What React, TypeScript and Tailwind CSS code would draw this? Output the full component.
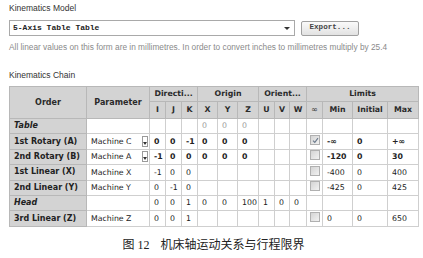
import React from 'react'

// Column widths in px (order, parameter, I J K, X Y Z, U V W, ∞, Min, Initial, Max)
const COLS = [77, 63, 16, 16, 16, 20, 20, 21, 16, 15, 17, 16, 30, 35, 31]

// Group boundaries get a darker rule
const GROUP_START = new Set([2, 5, 8, 11])

type Row = {
  order: string
  italic?: boolean
  param?: string
  select?: boolean
  bold?: boolean
  dim?: boolean
  vals: string[] // I J K X Y Z U V W
  check?: 'on' | 'off'
  limits?: [string, string, string]
}

const ROWS: Row[] = [
  { order: 'Table', italic: true, dim: true, vals: ['', '', '', '0', '0', '0', '', '', ''] },
  { order: '1st Rotary (A)', param: 'Machine C', select: true, bold: true, vals: ['0', '0', '-1', '0', '0', '0', '', '', ''], check: 'on', limits: ['-∞', '0', '+∞'] },
  { order: '2nd Rotary (B)', param: 'Machine A', select: true, bold: true, vals: ['-1', '0', '0', '0', '0', '0', '', '', ''], check: 'off', limits: ['-120', '0', '30'] },
  { order: '1st Linear (X)', param: 'Machine X', vals: ['-1', '0', '0', '', '', '', '', '', ''], check: 'off', limits: ['-400', '0', '400'] },
  { order: '2nd Linear (Y)', param: 'Machine Y', vals: ['0', '-1', '0', '', '', '', '', '', ''], check: 'off', limits: ['-425', '0', '425'] },
  { order: 'Head', italic: true, vals: ['0', '0', '1', '0', '0', '100', '1', '0', '0'] },
  { order: '3rd Linear (Z)', param: 'Machine Z', vals: ['0', '0', '1', '', '', '', '', '', ''], check: 'off', limits: ['0', '0', '650'] },
]

function edge(i: number) {
  return GROUP_START.has(i) ? 'border-l-[#9a9a9a]' : 'border-l-[#cfcfcf]'
}

function CheckBox({ on }: { on: boolean }) {
  return (
    <span className="inline-flex h-[10px] w-[10px] items-center justify-center border border-[#b0b0b0] bg-gradient-to-br from-[#d4d4d4] to-[#f2f2f2]">
      {on && (
        <svg width="7" height="7" viewBox="0 0 7 7">
          <path d="M1 3.6 L2.8 5.4 L6 1.2" fill="none" stroke="#6b7a8c" strokeWidth="1.1" />
        </svg>
      )}
    </span>
  )
}

function SelectIcon() {
  return (
    <span className="ml-auto mr-[1px] flex h-[11px] w-[6px] flex-col items-center justify-end border border-[#9a9a9a] bg-white pb-[1px]">
      <span className="h-0 w-0 border-x-[2px] border-t-[3px] border-x-transparent border-t-[#333]" />
    </span>
  )
}

export default function App() {
  const cell = 'border border-[#cfcfcf] px-[4px] text-left align-middle whitespace-nowrap'
  const head = 'border border-[#b8b8b8] bg-[#d3d3d3] text-center font-bold text-[#2a2a2a]'

  return (
    <div className="h-[258px] w-[423px] bg-white pl-[9px] pr-[5px] font-['Liberation_Sans',sans-serif] text-[#333]">
      <div className="pt-[3px] text-[8.5px] leading-[10px]">Kinematics Model</div>

      <div className="mt-[7px] flex items-center">
        <div className="flex h-[16px] w-[286px] items-center border border-[#a9a9a9] bg-white pl-[3px] pr-[4px]">
          <span className="font-['Liberation_Mono',monospace] text-[8px] font-bold text-[#222]">5-Axis Table Table</span>
          <span className="ml-auto h-0 w-0 border-x-[3px] border-t-[3px] border-x-transparent border-t-[#333]" />
        </div>
        <button className="ml-[6px] flex h-[15px] w-[58px] items-center justify-center rounded-[2px] border border-[#a0a0a0] bg-gradient-to-b from-[#fafafa] to-[#e2e2e2] font-['Liberation_Mono',monospace] text-[7.6px] font-bold text-[#444]">
          Export...
        </button>
      </div>

      <div className="mt-[6px] text-[8.3px] leading-[10px] text-[#8a8a8a]">
        All linear values on this form are in millimetres. In order to convert inches to millimetres multiply by 25.4
      </div>

      <div className="mt-[18px] text-[8.5px] leading-[10px]">Kinematics Chain</div>

      <table className="mt-[6px] w-[409px] table-fixed border-collapse border border-[#9a9a9a] font-['DejaVu_Sans',sans-serif] text-[7.8px] text-[#222]">
        <colgroup>
          {COLS.map((w, i) => (
            <col key={i} style={{ width: w }} />
          ))}
        </colgroup>
        <thead>
          <tr className="h-[15px]">
            <th rowSpan={2} className={`${head} text-[8px]`}>Order</th>
            <th rowSpan={2} className={`${head} text-[8px]`}>Parameter</th>
            <th colSpan={3} className={`${head} border-l-[#9a9a9a]`}>Directi...</th>
            <th colSpan={3} className={`${head} border-l-[#9a9a9a]`}>Origin</th>
            <th colSpan={3} className={`${head} border-l-[#9a9a9a]`}>Orient...</th>
            <th colSpan={4} className={`${head} border-l-[#9a9a9a]`}>Limits</th>
          </tr>
          <tr className="h-[17px]">
            {['I', 'J', 'K', 'X', 'Y', 'Z', 'U', 'V', 'W', '∞', 'Min', 'Initial', 'Max'].map((h, i) => (
              <th key={h} className={`${head} ${GROUP_START.has(i + 2) ? 'border-l-[#9a9a9a]' : ''} ${h === '∞' ? 'font-normal' : ''}`}>
                {h}
              </th>
            ))}
          </tr>
        </thead>
        <tbody>
          {ROWS.map((r) => (
            <tr key={r.order} className="h-[15.4px]">
              <td className={`border border-[#b8b8b8] bg-[#d3d3d3] px-[4px] text-[8px] font-bold whitespace-nowrap ${r.italic ? 'italic' : ''}`}>
                {r.order}
              </td>
              <td className={`${cell} pr-0`}>
                <div className="flex items-center">
                  <span>{r.param ?? ''}</span>
                  {r.select && <SelectIcon />}
                </div>
              </td>
              {r.vals.map((v, i) => (
                <td
                  key={i}
                  className={`${cell} ${edge(i + 2)} ${r.bold ? 'font-bold' : ''} ${r.dim ? 'text-[#999]' : ''}`}
                >
                  {v}
                </td>
              ))}
              <td className={`${cell} ${edge(11)} pl-[3px]`}>
                {r.check && <CheckBox on={r.check === 'on'} />}
              </td>
              {[0, 1, 2].map((k) => (
                <td key={k} className={`${cell} ${r.bold ? 'font-bold' : ''}`}>
                  {r.limits ? r.limits[k] : ''}
                </td>
              ))}
            </tr>
          ))}
        </tbody>
      </table>

      <div className="mt-[11px] text-center font-['Liberation_Serif','Noto_Sans_CJK_SC',serif] text-[12px] leading-[14px] text-[#222]">
        图 12<span className="ml-[11px]">机床轴运动关系与行程限界</span>
      </div>
    </div>
  )
}
